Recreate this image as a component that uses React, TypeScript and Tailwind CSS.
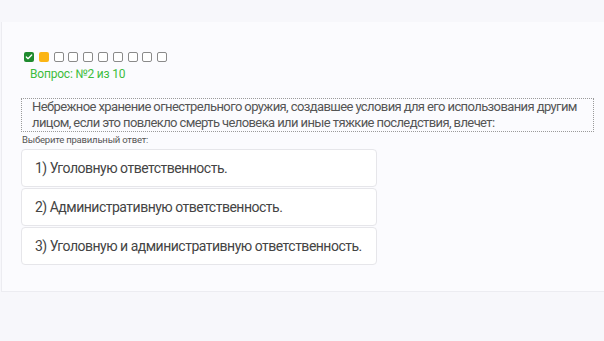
import { Check } from "lucide-react";

const answers = [
  "1) Уголовную ответственность.",
  "2) Административную ответственность.",
  "3) Уголовную и административную ответственность.",
];

function ProgressBoxes() {
  return (
    <div className="flex items-center gap-[4.8px]">
      <span className="flex h-[10px] w-[10px] items-center justify-center rounded-[2px] bg-[#1e8a2e]">
        <Check className="h-[8px] w-[8px] text-white" strokeWidth={4} />
      </span>
      <span className="h-[10px] w-[10px] rounded-[2px] bg-[#fbb515]" />
      {Array.from({ length: 8 }).map((_, i) => (
        <span
          key={i}
          className="h-[10px] w-[10px] rounded-[2px] border border-[#8a8a8a] bg-white"
        />
      ))}
    </div>
  );
}

export default function App() {
  return (
    <div className="h-[341px] w-[604px] overflow-hidden bg-[#f7f7fb] pt-[22px] font-['Roboto',sans-serif]">
      <div className="ml-px h-[270px] border-b border-l border-[#ececf1] bg-[#fbfbfe] pl-[19px] pt-[30px] pr-[10px]">
        <div className="pl-[3px]">
          <ProgressBoxes />
          <p className="mt-[5px] pl-[6px] text-[12px] leading-[14px] tracking-[-0.2px] text-[#3dbd3d]">
            Вопрос: №2 из 10
          </p>
        </div>

        <div className="mt-[17px] border border-dotted border-[#9a9a9a] px-[10px] text-[13px] leading-[16px] tracking-[-0.6px] text-[#555]">
          Небрежное хранение огнестрельного оружия, создавшее условия для его
          использования другим лицом, если это повлекло смерть человека или иные
          тяжкие последствия, влечет:
        </div>

        <p className="mt-[2px] pl-px text-[9.5px] leading-[11px] tracking-[-0.2px] text-[#555]">
          Выберите правильный ответ:
        </p>

        <div className="mt-[4px] flex w-[356px] flex-col gap-[1px]">
          {answers.map((a) => (
            <div
              key={a}
              className="flex h-[38px] items-center rounded-[4px] border border-[#e6e6ea] bg-white pl-[13px] text-[14px] tracking-[-0.5px] text-[#444]"
            >
              {a}
            </div>
          ))}
        </div>
      </div>
    </div>
  );
}
